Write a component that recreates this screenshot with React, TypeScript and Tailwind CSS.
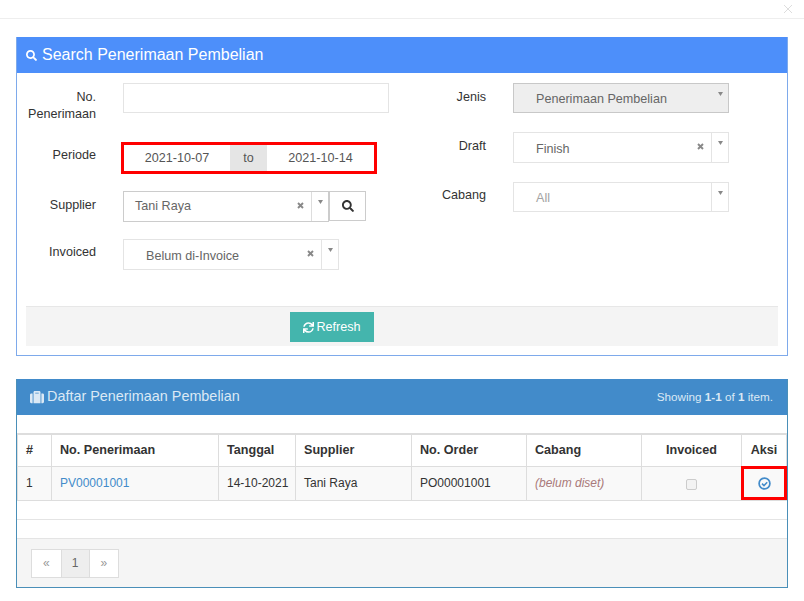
import { FaSearch, FaSync, FaSuitcase } from "react-icons/fa";

function Arrow() {
  return <div className="flex w-4 shrink-0 justify-center pt-[8px]"><svg width="5" height="4" viewBox="0 0 5 4"><path d="M0 0h5L2.5 4z" fill="#888" /></svg></div>;
}

function Clear() {
  return (
    <svg width="7" height="7" viewBox="0 0 7 7" className="mr-[7px] mb-[3px]">
      <path d="M1 1l5 5M6 1L1 6" stroke="#888" strokeWidth="1.9" fill="none" />
    </svg>
  );
}

function Select({ value, width, height = "h-[30px]", pad = "pl-[22px]", clear = true, muted = false, dark = false }: { value: string; width: string; height?: string; pad?: string; clear?: boolean; muted?: boolean; dark?: boolean }) {
  return (
    <div className={`flex ${height} ${width} shrink-0 border ${dark ? "border-[#ccc]" : "border-[#e4e4e4]"}`}>
      <div className={`flex min-w-0 flex-1 items-center ${pad} ${dark ? "" : "pt-[3px]"} text-[12.6px] ${muted ? "text-[#a3a3a3]" : "text-[#666]"}`}>{value}</div>
      {clear && <div className="flex items-center"><Clear /></div>}
      <div className={`w-px ${dark ? "bg-[#ddd]" : "bg-[#e4e4e4]"}`} />
      <Arrow />
    </div>
  );
}

function Label({ children, className = "" }: { children: React.ReactNode; className?: string }) {
  return <div className={`text-right text-[12.6px] leading-[17px] text-[#333] ${className}`}>{children}</div>;
}

const th = "border border-[#ddd] px-2 font-bold text-[12.6px] text-[#333]";
const td = "border border-[#ddd] px-2 text-[12px] text-[#333] whitespace-nowrap";

export default function App() {
  return (
    <div className="h-[601px] w-[804px] overflow-hidden bg-white font-['Liberation_Sans',Arial,sans-serif]">
      <div className="flex h-[19px] items-center justify-end border-b border-[#eee] pr-[12px]">
        <svg width="8" height="8" viewBox="0 0 8 8"><path d="M0 0l8 8M8 0L0 8" stroke="#ddd" strokeWidth="1" fill="none" /></svg>
      </div>

      <section className="ml-4 mt-[18px] h-[319px] w-[772px] border border-t-0 border-[#7eaaeb]">
        <header className="flex h-9 items-center bg-[#4d8ffa] pl-[9px] text-[16px] text-white">
          <FaSearch className="mr-[5px] text-[11px]" />
          Search Penerimaan Pembelian
        </header>
        <div className="flex h-[233px] pt-[10px]">
          <div className="flex w-[372px] flex-col">
            <div className="flex h-[59px] items-start">
              <Label className="mt-[6px] w-[79px]">No.<br />Penerimaan</Label>
              <div className="ml-[27px] h-[30px] w-[266px] border border-[#e4e4e4]" />
            </div>
            <div className="flex h-[49px] items-start">
              <Label className="mt-[5px] w-[79px]">Periode</Label>
              <div className="ml-[25px] flex h-[32px] w-[256px] border-[3px] border-[#f00] text-[12.6px] text-[#555]">
                <div className="flex w-[106px] items-center justify-center">2021-10-07</div>
                <div className="flex w-[37px] items-center justify-center bg-[#e5e5e5]">to</div>
                <div className="flex flex-1 items-center justify-center">2021-10-14</div>
              </div>
            </div>
            <div className="flex h-[48px] items-start">
              <Label className="mt-[6px] w-[79px]">Supplier</Label>
              <div className="ml-[27px] flex items-start">
                <Select value="Tani Raya" width="w-[206px]" height="h-[31px]" pad="pl-[11px]" dark />
                <div className="flex h-[30px] w-[37px] items-center justify-center border border-[#ccc] text-[12px] text-[#333]"><FaSearch /></div>
              </div>
            </div>
            <div className="flex items-start">
              <Label className="mt-[5px] w-[79px]">Invoiced</Label>
              <div className="ml-[27px]"><Select value="Belum di-Invoice" width="w-[216px]" height="h-[31px]" /></div>
            </div>
          </div>
          <div className="flex flex-col">
            <div className="flex h-[49px] items-start">
              <Label className="mt-[6px] w-[97px]">Jenis</Label>
              <div className="ml-[27px]"><div className="flex h-[30px] w-[216px] border border-[#c8c8c8] bg-[#eee] pl-[22px] pt-[3px] text-[12.6px] text-[#666]"><div className="flex flex-1 items-center">Penerimaan Pembelian</div><div className="-mt-[3px]"><Arrow /></div></div></div>
            </div>
            <div className="flex h-[50px] items-start">
              <Label className="mt-[6px] w-[97px]">Draft</Label>
              <div className="ml-[27px]"><Select value="Finish" width="w-[216px]" height="h-[31px]" /></div>
            </div>
            <div className="flex items-start">
              <Label className="mt-[5px] w-[97px]">Cabang</Label>
              <div className="ml-[27px]"><Select value="All" width="w-[216px]" clear={false} muted /></div>
            </div>
          </div>
        </div>
        <div className="mx-[9px] flex h-10 border-t border-[#e7e7e7] bg-[#f4f4f4] pl-[264px] pt-[5px]">
          <button className="flex h-[30px] w-[84px] items-center justify-center gap-[2px] bg-[#44b5ad] text-[12.6px] text-white">
            <FaSync className="text-[11px]" />Refresh
          </button>
        </div>
      </section>

      <section className="ml-4 mt-[23px] h-[209px] w-[772px] border border-t-0 border-[#4a8fb8]">
        <header className="flex h-9 items-center justify-between bg-[#428bca] pl-[13px] pr-[14px] text-[#dbe9f5]">
          <div className="flex items-center gap-[3px] text-[14.4px]"><FaSuitcase className="text-[14px]" />Daftar Penerimaan Pembelian</div>
          <div className="text-[11.7px]">Showing <b>1-1</b> of <b>1</b> item.</div>
        </header>
        <div className="h-[18px]" />
        <table className="w-[770px] table-fixed border-collapse border-t-2 border-[#ddd]">
          <colgroup>
            <col className="w-[34px]" /><col className="w-[167px]" /><col className="w-[77px]" /><col className="w-[116px]" /><col className="w-[115px]" /><col className="w-[115px]" /><col className="w-[100px]" /><col className="w-[45px]" />
          </colgroup>
          <thead>
            <tr className="h-[32px]">
              <th className={`${th} text-left`}>#</th><th className={`${th} text-left`}>No. Penerimaan</th><th className={`${th} text-left`}>Tanggal</th><th className={`${th} text-left`}>Supplier</th><th className={`${th} text-left`}>No. Order</th><th className={`${th} text-left`}>Cabang</th>
              <th className={`${th} text-center`}>Invoiced</th><th className={`${th} text-center`}>Aksi</th>
            </tr>
          </thead>
          <tbody className="bg-[#f9f9f9]">
            <tr className="h-[34px]">
              <td className={td}>1</td>
              <td className={td}><span className="text-[#428bca]">PV00001001</span></td>
              <td className={td}>14-10-2021</td>
              <td className={td}>Tani Raya</td>
              <td className={td}>PO00001001</td>
              <td className="border border-[#ddd] px-2 text-[12px] italic text-[#a97a7a]">(belum diset)</td>
              <td className="border border-[#ddd] text-center"><div className="mx-auto mt-[3px] h-[11px] w-[11px] rounded-[2px] border border-[#ccc] bg-[#f3f3f3]" /></td>
              <td className="relative border border-[#ddd] text-center">
                <svg width="13" height="13" viewBox="0 0 13 13" className="mx-auto">
                  <circle cx="6.5" cy="6.5" r="5.4" fill="none" stroke="#428bca" strokeWidth="1.7" />
                  <path d="M4 6.6l2 2 3.2-3.4" fill="none" stroke="#428bca" strokeWidth="1.5" />
                </svg>
                <div className="absolute -left-px -top-px h-[34px] w-[46px] border-[3px] border-[#f00]" />
              </td>
            </tr>
          </tbody>
        </table>
        <div className="h-[19px] border-b border-[#e4e4e4]" />
        <div className="h-[19px] border-b border-[#e4e4e4]" />
        <div className="h-[48px] bg-[#f5f5f5] pl-[14px] pt-[10px]">
          <div className="flex h-[29px] w-[88px] border border-[#ddd] bg-white text-[12px] text-[#999]">
            <div className="flex flex-1 items-center justify-center">«</div>
            <div className="flex w-[29px] items-center justify-center border-x border-[#ddd] bg-[#eee] text-[#666]">1</div>
            <div className="flex flex-1 items-center justify-center">»</div>
          </div>
        </div>
      </section>
    </div>
  );
}
